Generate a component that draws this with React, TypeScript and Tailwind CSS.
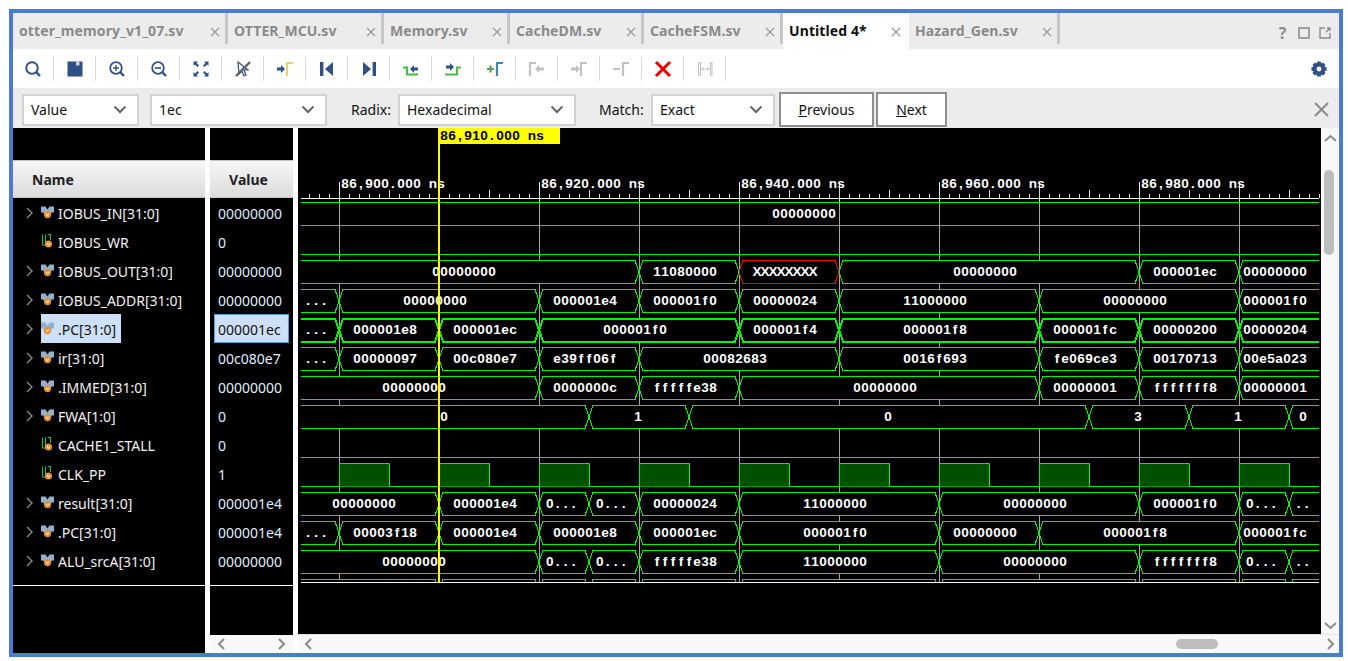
import React from "react";

const G = "#00f400";

const rows: { name: string; value: string; kind: "bus" | "wire"; segs?: number[]; labels?: string[]; bold?: boolean }[] = [
  { name: "IOBUS_IN[31:0]", value: "00000000", kind: "bus", segs: [301, 1319], labels: ["00000000"] },
  { name: "IOBUS_WR", value: "0", kind: "wire" },
  { name: "IOBUS_OUT[31:0]", value: "00000000", kind: "bus", segs: [301, 639, 739, 839, 1139, 1239, 1319], labels: ["00000000", "11080000", "XXXXXXXX", "00000000", "000001ec", "00000000"] },
  { name: "IOBUS_ADDR[31:0]", value: "00000000", kind: "bus", segs: [301, 339, 539, 639, 739, 839, 1039, 1239, 1319], labels: ["...", "00000000", "000001e4", "000001f0", "00000024", "11000000", "00000000", "000001f0"] },
  { name: ".PC[31:0]", value: "000001ec", kind: "bus", bold: true, segs: [301, 339, 439, 539, 739, 839, 1039, 1139, 1239, 1319], labels: ["...", "000001e8", "000001ec", "000001f0", "000001f4", "000001f8", "000001fc", "00000200", "00000204"] },
  { name: "ir[31:0]", value: "00c080e7", kind: "bus", segs: [301, 339, 439, 539, 639, 839, 1039, 1139, 1239, 1319], labels: ["...", "00000097", "00c080e7", "e39ff06f", "00082683", "0016f693", "fe069ce3", "00170713", "00e5a023"] },
  { name: ".IMMED[31:0]", value: "00000000", kind: "bus", segs: [301, 539, 639, 739, 1039, 1139, 1239, 1319], labels: ["00000000", "0000000c", "fffffe38", "00000000", "00000001", "fffffff8", "00000001"] },
  { name: "FWA[1:0]", value: "0", kind: "bus", segs: [301, 589, 689, 1089, 1189, 1289, 1319], labels: ["0", "1", "0", "3", "1", "0"] },
  { name: "CACHE1_STALL", value: "0", kind: "wire" },
  { name: "CLK_PP", value: "1", kind: "wire" },
  { name: "result[31:0]", value: "000001e4", kind: "bus", segs: [301, 439, 539, 589, 639, 739, 939, 1139, 1239, 1289, 1319], labels: ["00000000", "000001e4", "0...", "0...", "00000024", "11000000", "00000000", "000001f0", "0...", ".."] },
  { name: ".PC[31:0]", value: "000001e4", kind: "bus", segs: [301, 339, 439, 539, 639, 739, 939, 1039, 1239, 1319], labels: ["...", "00003f18", "000001e4", "000001e8", "000001ec", "000001f0", "00000000", "000001f8", "000001fc"] },
  { name: "ALU_srcA[31:0]", value: "00000000", kind: "bus", segs: [301, 539, 589, 639, 739, 939, 1139, 1239, 1289, 1319], labels: ["00000000", "0...", "0...", "fffffe38", "11000000", "00000000", "fffffff8", "0...", ".."] },
  { name: "", value: "", kind: "bus", segs: [301, 439, 539, 589, 639, 739, 939, 1139, 1239, 1289, 1319], labels: [] },
];

function hexPath(a: number, b: number, top: number, bot: number) {
  const mid = (top + bot) / 2;
  const first = a <= 301;
  const last = b >= 1319;
  const l = first ? [`M${a} ${top}`] : [`M${a} ${mid}`, `L${a + 4} ${top}`];
  l.push(last ? `L${b} ${top}` : `L${b - 4} ${top}`);
  if (!last) l.push(`L${b} ${mid}`, `L${b - 4} ${bot}`);
  else l.push(`M${b} ${bot}`);
  l.push(first ? `L${a} ${bot}` : `L${a + 4} ${bot}`);
  if (!first) l.push(`L${a} ${mid}`);
  return l.join(" ");
}

const widths: Record<string, number> = { f: 0.333, ".": 0.278, ",": 0.278, " ": 0.278, n: 0.611, b: 0.611, d: 0.611, X: 0.667 };
const FS = 13.6;
// Fixed 8px cell for every character, the way the waveform viewer's bitmap font sets them.
function CellText({ s, x, y, fill }: { s: string; x: number; y: number; fill: string }) {
  const xs = s.split("").map((c, i) => (x + i * 8 + (8 - (widths[c] ?? 0.556) * FS) / 2).toFixed(2)).join(" ");
  return (
    <text x={xs} y={y} fill={fill} style={{ fontFamily: "'Liberation Sans', Arial, sans-serif", fontWeight: 700, fontSize: FS }}>{s}</text>
  );
}

function Waves() {
  const grid: number[] = [];
  for (let x = 339; x < 1319; x += 100) grid.push(x);
  const ticks: number[] = [];
  for (let x = 309; x <= 1319; x += 10) ticks.push(x);
  return (
    <svg width={1023} height={506} viewBox="298 128 1023 506" className="block">
      <rect x={298} y={128} width={1023} height={506} fill="#000" />
      <defs>
        <clipPath id="wf"><rect x={298} y={128} width={1023} height={454} /></clipPath>
      </defs>
      <path d="M301 198.5H1319" stroke="#fff" />
      {ticks.map((x) => {
        const big = (x - 339) % 100 === 0;
        const mid = (x - 339) % 50 === 0;
        return <path key={x} d={`M${x + 0.5} ${big ? 182 : mid ? 190 : 194}V${big ? 203 : 198}`} stroke="#ddd" />;
      })}
      {([["86,900.000 ns", 341], ["86,920.000 ns", 541], ["86,940.000 ns", 741], ["86,960.000 ns", 941], ["86,980.000 ns", 1141]] as [string, number][]).map(([t, x]) => (
        <CellText key={t} s={t} x={x} y={188} fill="#fff" />
      ))}
      <g clipPath="url(#wf)">
        {grid.map((x) => <path key={x} d={`M${x + 0.5} 203V582`} stroke="#a8a8a8" />)}
        {rows.map((r, i) => {
          const top = 202.5 + 29 * i;
          const bot = 225.5 + 29 * i;
          if (r.kind === "wire") {
            if (r.name !== "CLK_PP") return <path key={i} d={`M301 ${bot}H1319`} stroke={G} />;
            const rects = [339, 439, 539, 639, 739, 839, 939, 1039, 1139, 1239];
            return (
              <g key={i}>
                <path d={`M301 ${bot}H1319`} stroke={G} />
                {rects.map((x) => (
                  <path key={x} d={`M${x + 0.5} ${bot}V${top}H${x + 50.5}V${bot}`} fill="#005000" stroke={G} />
                ))}
              </g>
            );
          }
          const segs = r.segs!;
          const out: React.ReactNode[] = [];
          for (let s = 0; s < segs.length - 1; s++) {
            const label = r.labels![s];
            if (label === "XXXXXXXX") continue;
            out.push(<path key={`p${s}`} d={hexPath(segs[s], segs[s + 1], top, bot)} fill="#000" stroke={G} strokeWidth={r.bold ? 2 : 1} shapeRendering="crispEdges" />);
          }
          for (let s = 0; s < segs.length - 1; s++) {
            const a = segs[s];
            const b = segs[s + 1];
            const label = r.labels![s];
            if (label === "XXXXXXXX") out.push(<path key={`r${s}`} d={hexPath(a, b, top, bot)} fill="#000" stroke="#f00000" shapeRendering="crispEdges" />);
            if (label) {
              const n = label.length;
              const off = -1 - ((n - 1) * 3) / 7 - (a <= 301 && n > 1 ? 2 : 0);
              out.push(<CellText key={`t${s}`} s={label} x={(a + b) / 2 + off - (n * 8) / 2} y={top + 15} fill="#fff" />);
            }
          }
          return <g key={i}>{out}</g>;
        })}
      </g>
      <path d="M301 582.5H1319" stroke="#fff" />
      <rect x={439} y={128} width={121} height={16} fill="#ffff00" />
      <CellText s="86,910.000 ns" x={440} y={140} fill="#000" />
      <rect x={438} y={128} width={2} height={455} fill="#ffff00" />
    </svg>
  );
}

const BusIcon = () => (
  <svg width={13} height={13} viewBox="0 0 13 13" className="shrink-0">
    <path d="M0 0.5H4.5L6.5 3.5L8.5 0.5H13V6.5H10.5V7.5H2.5V6.5H0Z" fill="#8fb2cf" />
    <circle cx={6.5} cy={8.6} r={3.6} fill="#e8902c" />
    <path d="M5.2 7.5L6.5 10L7.8 7.5" fill="none" stroke="#fff" strokeWidth={0.9} />
  </svg>
);
const WireIcon = () => (
  <svg width={13} height={15} viewBox="0 0 13 15" className="shrink-0">
    <path d="M1.5 0.5V11H4.5V0.5M6.5 0.5H9.5V6" fill="none" stroke="#3fae49" strokeWidth={1.2} />
    <circle cx={7.5} cy={10} r={3.6} fill="#e8902c" />
    <path d="M6.2 8.9L7.5 11.4L8.8 8.9" fill="none" stroke="#fff" strokeWidth={0.9} />
  </svg>
);
const Chevron = ({ d = "M1 1L6 6L1 11", sw = 1.4 }: { d?: string; sw?: number }) => (
  <svg width={8} height={12} viewBox="0 0 8 12" className="shrink-0">
    <path d={d} fill="none" stroke="#8a8a8a" strokeWidth={sw} />
  </svg>
);

const Navy = "#2f4f86";
const Ic = ({ children }: { children: React.ReactNode }) => (
  <svg width={20} height={20} viewBox="0 0 20 20">{children}</svg>
);
const bracket = (x: number, c: string) => (
  <path d={`M${x} 17V4H${x + 6}`} fill="none" stroke={c} strokeWidth={2.2} />
);
const rightArrow = (x: number, c: string, w = 8) => (
  <path d={`M${x} 8.5H${x + w - 4}V6L${x + w} 10L${x + w - 4} 14V11.5H${x}Z`} fill={c} />
);
const leftArrow = (x: number, c: string, w = 8) => (
  <path d={`M${x + w} 8.5H${x + 4}V6L${x} 10L${x + 4} 14V11.5H${x + w}Z`} fill={c} />
);

const toolIcons: React.ReactNode[] = [
  <Ic><circle cx={9} cy={9} r={5.8} fill="none" stroke={Navy} strokeWidth={2} /><path d="M13 13L17 17" stroke={Navy} strokeWidth={2.4} /></Ic>,
  <Ic><path d="M2.5 2.5H17.5V17.5H2.5Z" fill={Navy} /><rect x={11} y={2.5} width={3.5} height={4} fill="#c9d3e3" /></Ic>,
  <Ic><circle cx={9} cy={9} r={5.8} fill="none" stroke={Navy} strokeWidth={1.8} /><path d="M13 13L17 17" stroke={Navy} strokeWidth={2.4} /><path d="M6 9H12M9 6V12" stroke={Navy} strokeWidth={1.4} /></Ic>,
  <Ic><circle cx={9} cy={9} r={5.8} fill="none" stroke={Navy} strokeWidth={1.8} /><path d="M13 13L17 17" stroke={Navy} strokeWidth={2.4} /><path d="M6 9H12" stroke={Navy} strokeWidth={1.6} /></Ic>,
  <Ic><path d="M2.5 2.5H7L5.6 4L8 6.5L6.5 8L4 5.6L2.5 7ZM17.5 2.5V7L16 5.6L13.5 8L12 6.5L14.4 4L13 2.5ZM2.5 17.5V13L4 14.4L6.5 12L8 13.5L5.6 16L7 17.5ZM17.5 17.5H13L14.4 16L12 13.5L13.5 12L16 14.4L17.5 13Z" fill={Navy} /></Ic>,
  <Ic><path d="M5 3L15 11H11L13 16L11 17L9 12L6 15Z" fill="#fff" stroke={Navy} strokeWidth={1.2} /><path d="M3 17L17 3" stroke="#5f5f5f" strokeWidth={2.4} /></Ic>,
  <Ic>{rightArrow(2, Navy)}{bracket(12, "#e8cf7c")}</Ic>,
  <Ic><rect x={3} y={3} width={3.4} height={14} fill={Navy} /><path d="M16 3V17L8 10Z" fill={Navy} /></Ic>,
  <Ic><rect x={13.6} y={3} width={3.4} height={14} fill={Navy} /><path d="M4 3V17L12 10Z" fill={Navy} /></Ic>,
  <Ic><path d="M2 8.5H6V15.5H17" fill="none" stroke="#45bf45" strokeWidth={2.2} />{leftArrow(9, Navy, 8)}</Ic>,
  <Ic><path d="M2 15.5H14V8.5H18" fill="none" stroke="#45bf45" strokeWidth={2.2} /><path d="M3 6.5H7V4L11 8L7 12V9.5H3Z" fill={Navy} /></Ic>,
  <Ic><path d="M2 10H9M5.5 6.5V13.5" stroke="#52a552" strokeWidth={2.2} />{bracket(12, "#3f83b8")}</Ic>,
  <Ic>{bracket(3, "#c2c2c2")}{leftArrow(8, "#c2c2c2", 9)}</Ic>,
  <Ic>{rightArrow(2, "#c2c2c2", 9)}{bracket(12, "#c2c2c2")}</Ic>,
  <Ic><path d="M2 10H9" stroke="#c2c2c2" strokeWidth={2} />{bracket(12, "#c2c2c2")}</Ic>,
  <Ic><path d="M3 3L17 17M17 3L3 17" stroke="#ea0000" strokeWidth={3} /></Ic>,
  <Ic><path d="M3.5 3.5V16.5H5.5V3.5ZM15.5 3.5H17V16.5H15.5Z" fill="#fff" stroke="#c2c2c2" /><path d="M6.5 10H14.5M8.5 8L6.5 10L8.5 12M12.5 8L14.5 10L12.5 12" fill="none" stroke="#c2c2c2" /></Ic>,
];

const tabs = [
  { t: "otter_memory_v1_07.sv", w: "w-[215px]" },
  { t: "OTTER_MCU.sv", w: "w-[156px]" },
  { t: "Memory.sv", w: "w-[126px]" },
  { t: "CacheDM.sv", w: "w-[134px]" },
  { t: "CacheFSM.sv", w: "w-[139px]" },
  { t: "Untitled 4*", w: "w-[126px]", active: true },
  { t: "Hazard_Gen.sv", w: "w-[151px]" },
];

const Select = ({ text, w, ml = "" }: { text: string; w: string; ml?: string }) => (
  <div className={`${w} ${ml} h-[32px] bg-white border-2 border-[#d2d2d2] flex items-center justify-between pl-[7px] pr-[10px] text-[14px] text-[#111] shrink-0`}>
    <span>{text}</span>
    <svg width={14} height={9} viewBox="0 0 14 9"><path d="M1.5 1.5L7 7L12.5 1.5" fill="none" stroke="#666" strokeWidth={2} /></svg>
  </div>
);

export default function App() {
  return (
    <div className="w-[1348px] h-[661px] bg-white pt-[9px] pl-[9px] overflow-hidden font-['Noto_Sans',sans-serif]">
      <div className="w-[1334px] h-[648px] border-4 border-[#4a7dd0] flex flex-col bg-white">
        {/* tabs */}
        <div className="h-[36px] bg-[#ececec] flex shrink-0">
          {tabs.map((t) => (
            <div
              key={t.t}
              className={`${t.w} flex items-start justify-between pl-[6px] pt-[8px] text-[14px] font-bold leading-[20px] ${
                t.active ? "bg-white text-[#111] pr-[8px]" : "h-[31px] border-r-[3px] border-[#c6c6c6] text-[#8a8a8a] pr-[5px]"
              }`}
            >
              <span className="tracking-[0.1px]">{t.t}</span>
              <svg width={10} height={10} viewBox="0 0 10 10" className="mt-[6px]"><path d="M1 1L9 9M9 1L1 9" stroke="#9a9a9a" strokeWidth={1.2} /></svg>
            </div>
          ))}
          <div className="flex-1 flex items-center justify-end pr-[8px] gap-[9px] pt-[4px]">
            <span className="text-[16px] font-bold text-[#8c8c8c] leading-none w-[13px] text-center">?</span>
            <svg width={12} height={12} viewBox="0 0 12 12"><rect x={1} y={1} width={10} height={10} fill="none" stroke="#8c8c8c" strokeWidth={1.6} /></svg>
            <svg width={12} height={12} viewBox="0 0 12 12"><path d="M6 1H1V11H11V6M7 5L11 1M8 1H11V4" fill="none" stroke="#8c8c8c" strokeWidth={1.4} /></svg>
          </div>
        </div>
        {/* toolbar */}
        <div className="h-[39px] bg-white flex items-center shrink-0">
          {toolIcons.map((ic, i) => (
            <div key={i} className={`${i === 0 ? "w-[41px]" : "w-[42px]"} h-[25px] border-r border-[#dcdcdc] flex items-center justify-center`}>
              {ic}
            </div>
          ))}
          <div className="flex-1 flex justify-end pr-[12px]">
            <svg width={16} height={16} viewBox="0 0 16 16">
              <path d="M6.3 0.5H9.7L10.2 2.6L12.1 1.5L14.5 3.9L13.4 5.8L15.5 6.3V9.7L13.4 10.2L14.5 12.1L12.1 14.5L10.2 13.4L9.7 15.5H6.3L5.8 13.4L3.9 14.5L1.5 12.1L2.6 10.2L0.5 9.7V6.3L2.6 5.8L1.5 3.9L3.9 1.5L5.8 2.6Z" fill={Navy} />
              <circle cx={8} cy={8} r={2.4} fill="#fff" />
            </svg>
          </div>
        </div>
        {/* find bar */}
        <div className="h-[40px] bg-[#ececec] flex items-center shrink-0 pl-[9px] pt-[3px] text-[14px] text-[#111]">
          <Select text="Value" w="w-[117px]" />
          <Select text="1ec" w="w-[177px]" ml="ml-[11px]" />
          <span className="ml-[24px] w-[47px] shrink-0">Radix:</span>
          <Select text="Hexadecimal" w="w-[178px]" />
          <span className="ml-[23px] w-[52px] shrink-0">Match:</span>
          <Select text="Exact" w="w-[124px]" />
          <div className="ml-[4px] w-[95px] h-[35px] border-2 border-[#8e8e8e] bg-white flex items-center justify-center shrink-0"><span><span className="underline">P</span>revious</span></div>
          <div className="ml-[2px] w-[71px] h-[35px] border-2 border-[#8e8e8e] bg-white flex items-center justify-center shrink-0"><span><span className="underline">N</span>ext</span></div>
          <div className="flex-1 flex justify-end pr-[10px]">
            <svg width={15} height={15} viewBox="0 0 15 15"><path d="M1 1L14 14M14 1L1 14" stroke="#8a8a8a" strokeWidth={2} /></svg>
          </div>
        </div>
        {/* main */}
        <div className="flex-1 flex min-h-0 bg-white">
          {/* names */}
          <div className="w-[192px] bg-black flex flex-col shrink-0">
            <div className="h-[32px] shrink-0" />
            <div className="h-[38px] shrink-0 bg-gradient-to-b from-[#f6f6f6] to-[#dcdcdc] border-y border-[#c4c4c4] flex items-center pl-[19px] text-[14px] font-bold text-[#222]">Name</div>
            <div className="h-[387px] overflow-hidden shrink-0 border-b border-white box-content">
              {rows.slice(0, 13).map((r, i) => (
                <div key={i} className="h-[29px] flex items-center text-[14px] text-[#f2f2f2]">
                  <div className="w-[28px] pl-[13px] shrink-0">{r.kind === "bus" && <Chevron />}</div>
                  <div className={`flex items-center h-[29px] ${i === 4 ? "bg-[#cde0f7] text-[#111] w-[80px]" : ""}`}>
                    {r.kind === "bus" ? <BusIcon /> : <WireIcon />}
                    <span className="ml-[4px] pt-[2px] whitespace-nowrap">{r.name}</span>
                  </div>
                </div>
              ))}
            </div>
          </div>
          <div className="w-[5px] shrink-0" />
          {/* values */}
          <div className="w-[83px] flex flex-col shrink-0">
            <div className="flex-1 bg-black flex flex-col min-h-0">
              <div className="h-[32px] shrink-0" />
              <div className="h-[38px] shrink-0 bg-gradient-to-b from-[#f6f6f6] to-[#dcdcdc] border-y border-[#c4c4c4] flex items-center justify-center pr-[6px] text-[14px] font-bold text-[#222]">Value</div>
              <div className="h-[387px] overflow-hidden shrink-0 border-b border-white box-content">
                {rows.slice(0, 13).map((r, i) => (
                  <div key={i} className="h-[29px] flex items-center text-[14px] text-[#dfeeff]">
                    {i === 4 ? (
                      <div className="ml-[4px] w-[75px] h-[29px] bg-[#cde0f7] border border-[#5b9bd5] text-[#111] flex items-center pl-[3px] pt-[2px]">{r.value}</div>
                    ) : (
                      <span className="pl-[8px] pt-[2px]">{r.value}</span>
                    )}
                  </div>
                ))}
              </div>
            </div>
            <div className="h-[18px] bg-[#f8f8f8] flex items-center justify-between px-[7px] shrink-0">
              <Chevron d="M7 1L2 6L7 11" sw={2} />
              <Chevron sw={2} />
            </div>
          </div>
          <div className="w-[5px] shrink-0" />
          {/* wave */}
          <div className="flex-1 flex flex-col min-w-0">
            <div className="flex-1 flex min-h-0">
              <Waves />
              <div className="flex-1 bg-[#f8f8f8] relative flex flex-col items-center justify-between pt-[6px] pb-[4px]">
                <svg width={13} height={8} viewBox="0 0 13 8"><path d="M1 7L6.5 2L12 7" fill="none" stroke="#8a8a8a" strokeWidth={2} /></svg>
                <div className="absolute top-[42px] left-[3px] w-[10px] h-[85px] rounded-[5px] bg-[#bdbdbd]" />
                <svg width={13} height={8} viewBox="0 0 13 8"><path d="M1 1L6.5 6L12 1" fill="none" stroke="#8a8a8a" strokeWidth={2} /></svg>
              </div>
            </div>
            <div className="h-[19px] bg-[#f8f8f8] border-t border-[#e4e4e4] flex items-center justify-between pl-[6px] pr-[4px] shrink-0 relative">
              <Chevron d="M7 1L2 6L7 11" sw={2} />
              <div className="absolute left-[878px] top-[4px] w-[42px] h-[10px] rounded-[5px] bg-[#bdbdbd]" />
              <Chevron sw={2} />
            </div>
          </div>
        </div>
      </div>
    </div>
  );
}
